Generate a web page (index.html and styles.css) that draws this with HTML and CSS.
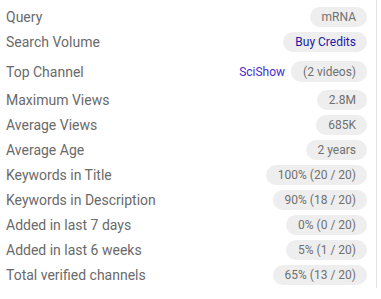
FILE: index.html
```html
<!DOCTYPE html>
<html lang="en">
<head>
    <meta charset="UTF-8">
    <meta name="viewport" content="width=device-width, initial-scale=1.0">
    <title>Keyword Stats</title>
    <link rel="stylesheet" href="styles.css">
</head>
<body>

<div class="stats">
    <div class="row">
        <span class="label">Query</span>
        <span class="chip">mRNA</span>
    </div>
    <div class="row">
        <span class="label">Search Volume</span>
        <span class="chip chip-link">Buy Credits</span>
    </div>
    <div class="row row-channel">
        <span class="label">Top Channel</span>
        <span class="value">
            <a class="channel" href="#">SciShow</a>
            <span class="chip">(2 videos)</span>
        </span>
    </div>
    <div class="row">
        <span class="label">Maximum Views</span>
        <span class="chip">2.8M</span>
    </div>
    <div class="row">
        <span class="label">Average Views</span>
        <span class="chip">685K</span>
    </div>
    <div class="row">
        <span class="label">Average Age</span>
        <span class="chip">2 years</span>
    </div>
    <div class="row">
        <span class="label">Keywords in Title</span>
        <span class="chip">100% (20 / 20)</span>
    </div>
    <div class="row">
        <span class="label">Keywords in Description</span>
        <span class="chip">90% (18 / 20)</span>
    </div>
    <div class="row">
        <span class="label">Added in last 7 days</span>
        <span class="chip">0% (0 / 20)</span>
    </div>
    <div class="row">
        <span class="label">Added in last 6 weeks</span>
        <span class="chip">5% (1 / 20)</span>
    </div>
    <div class="row">
        <span class="label">Total verified channels</span>
        <span class="chip">65% (13 / 20)</span>
    </div>
</div>

</body>
</html>
```

FILE: styles.css
```css
body {
    margin: 0;
    background-color: #ffffff;
    font-family: Roboto, "Noto Sans", Arial, sans-serif;
}
.stats {
    width: 377px;
    height: 288px;
    border-right: 1px solid #e3e3e3;
    padding: 7px 9px 0 6px;
    box-sizing: border-box;
    display: flex;
    flex-direction: column;
    gap: 5px;
}
.row {
    display: flex;
    justify-content: space-between;
    align-items: center;
    height: 20px;
}
.row-channel {
    height: 21px;
    margin: 4px 0 3px;
}
.label {
    font-size: 14px;
    color: #6a6a6a;
}
.value {
    display: flex;
    align-items: center;
    gap: 6px;
    height: 100%;
}
.chip {
    display: inline-flex;
    align-items: center;
    height: 100%;
    padding: 0 11px 0 12px;
    border-radius: 10px;
    background-color: #eeeeee;
    color: #707070;
    font-size: 12px;
    box-sizing: border-box;
}
.chip-link {
    color: #1a1aa6;
}
.channel {
    font-size: 12px;
    color: #4a2bd0;
    text-decoration: none;
}
```
